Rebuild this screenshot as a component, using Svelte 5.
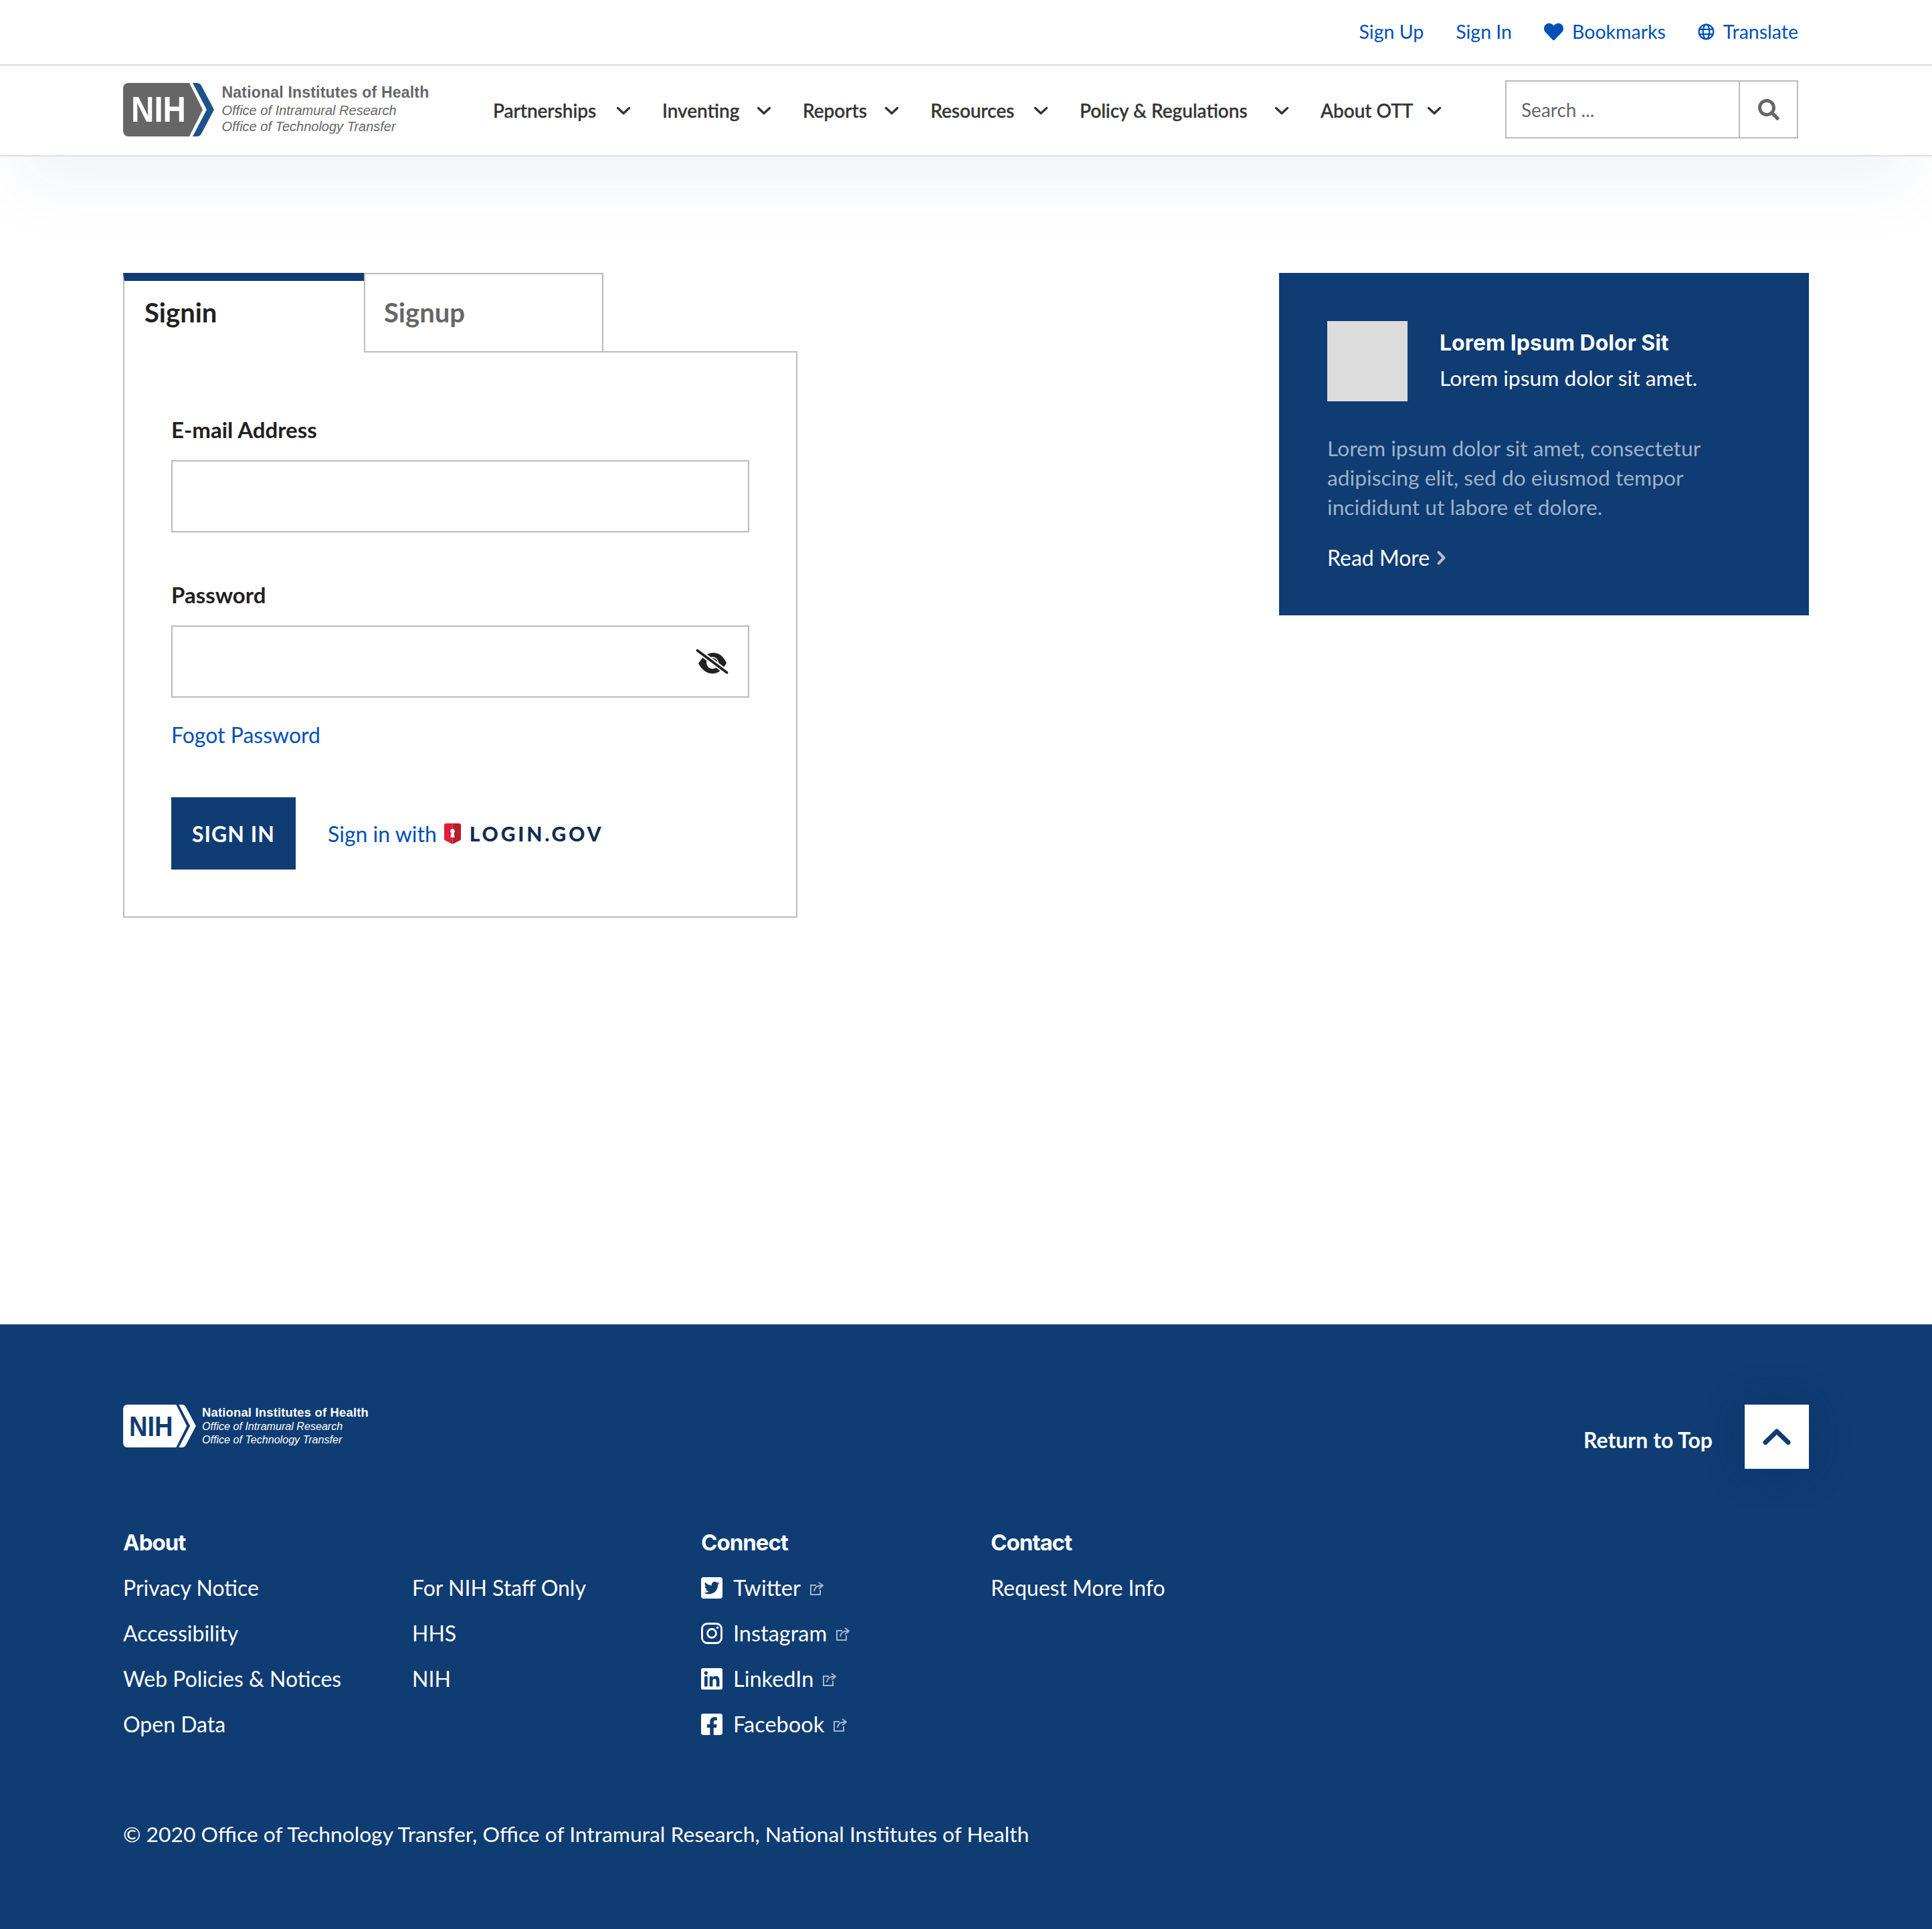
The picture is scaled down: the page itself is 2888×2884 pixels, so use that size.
<script>
  const navItems = [
    { label: 'Partnerships', width: 253 },
    { label: 'Inventing', width: 210 },
    { label: 'Reports', width: 191 },
    { label: 'Resources', width: 223 },
    { label: 'Policy & Regulations', width: 360 },
    { label: 'About OTT', width: 228 }
  ];
  const aboutA = ['Privacy Notice', 'Accessibility', 'Web Policies & Notices', 'Open Data'];
  const aboutB = ['For NIH Staff Only', 'HHS', 'NIH'];
  const socials = ['Twitter', 'Instagram', 'LinkedIn', 'Facebook'];
  const paths = {
    Twitter: 'M400 32H48C21.5 32 0 53.5 0 80v352c0 26.5 21.5 48 48 48h352c26.5 0 48-21.5 48-48V80c0-26.5-21.5-48-48-48zm-48.9 158.8c.2 2.8.2 5.7.2 8.5 0 86.7-66 186.6-186.6 186.6-37.2 0-71.7-10.8-100.7-29.4 5.3.6 10.4.8 15.8.8 30.7 0 58.9-10.4 81.4-28-28.8-.6-53-19.5-61.3-45.5 10.1 1.5 19.2 1.5 29.6-1.2-30-6.1-52.5-32.5-52.5-64.4v-.8c8.7 4.9 18.9 7.9 29.6 8.3a65.447 65.447 0 0 1-29.2-54.6c0-12.2 3.2-23.4 8.9-33.1 32.3 39.8 80.8 65.8 135.2 68.6-9.3-44.5 24-80.6 64-80.6 18.9 0 35.9 7.9 47.9 20.7 14.8-2.8 29-8.3 41.6-15.8-4.9 15.2-15.2 28-28.8 36.1 13.2-1.4 26-5.1 37.8-10.2-8.9 13.1-20.1 24.7-32.9 34z',
    LinkedIn: 'M416 32H31.9C14.3 32 0 46.5 0 64.3v383.4C0 465.5 14.3 480 31.9 480H416c17.6 0 32-14.5 32-32.3V64.3c0-17.8-14.4-32.3-32-32.3zM135.4 416H69V202.2h66.5V416zm-33.2-243c-21.3 0-38.5-17.3-38.5-38.5S80.9 96 102.2 96c21.2 0 38.5 17.3 38.5 38.5 0 21.3-17.2 38.5-38.5 38.5zm282.1 243h-66.4V312c0-24.8-.5-56.7-34.5-56.7-34.6 0-39.9 27-39.9 54.9V416h-66.4V202.2h63.7v29.2h.9c8.9-16.8 30.6-34.5 62.9-34.5 67.2 0 79.7 44.3 79.7 101.9V416z',
    Facebook: 'M400 32H48A48 48 0 0 0 0 80v352a48 48 0 0 0 48 48h137.25V327.69h-63V256h63v-54.64c0-62.15 37-96.48 93.67-96.48 27.14 0 55.52 4.84 55.52 4.84v61h-31.27c-30.81 0-40.42 19.12-40.42 38.73V256h68.78l-11 71.69h-57.78V480H400a48 48 0 0 0 48-48V80a48 48 0 0 0-48-48z'
  };
</script>

<div class="page">
  <header class="masthead">
    <div class="utility">
      <a class="ulink" href="#a">Sign Up</a>
      <a class="ulink" href="#a">Sign In</a>
      <a class="ulink" href="#a">
        <svg class="heart" viewBox="0 0 512 512"><path fill="currentColor" d="M462.3 62.6C407.5 15.9 326 24.3 275.7 76.2L256 96.5l-19.7-20.3C186.1 24.3 104.5 15.9 49.7 62.6c-62.8 53.6-66.1 149.8-9.9 207.9l193.5 199.8c12.5 12.9 32.8 12.9 45.3 0l193.5-199.8c56.3-58.1 53-154.3-9.8-207.9z"/></svg>
        Bookmarks
      </a>
      <a class="ulink" href="#a">
        <svg class="globe" viewBox="0 0 24 24" fill="none" stroke="currentColor" stroke-width="2.200"><circle cx="12" cy="12" r="10.400"/><ellipse cx="12" cy="12" rx="4.600" ry="10.400"/><path d="M2 8.500h20M2 15.500h20"/></svg>
        Translate
      </a>
    </div>
    <div class="navbar">
      <a class="logo head-logo" href="#a">
        <svg class="logo-mark" viewBox="0 0 136 80">
          <path fill="#666" d="M8 0H99L119 40 99 80H8a8 8 0 0 1-8-8V8a8 8 0 0 1 8-8z"/>
          <path fill="#1f5288" d="M104 0h6c3 0 5 1 7 4l19 36-19 36c-2 3-4 4-7 4h-6l21-40z"/>
          <text x="12" y="58" class="nih" textLength="82" lengthAdjust="spacingAndGlyphs">NIH</text>
        </svg>
        <span class="logo-text grey">
          <b>National Institutes of Health</b>
          <i>Office of Intramural Research</i>
          <i>Office of Technology Transfer</i>
        </span>
      </a>
      <nav class="nav">
        {#each navItems as item}
          <a class="nav-item" href="#a" style="width: {item.width}px">
            <span>{item.label}</span>
            <svg viewBox="0 0 22 13" fill="none" stroke="currentColor" stroke-width="3.400" stroke-linecap="round" stroke-linejoin="round"><path d="M2.500 2.500l8.500 8 8.500-8"/></svg>
          </a>
        {/each}
      </nav>
      <div class="search">
        <span class="search-field">Search ...</span>
        <span class="search-btn">
          <svg viewBox="0 0 512 512"><path fill="#666" d="M505 442.7L405.3 343c-4.5-4.5-10.6-7-17-7H372c27.6-35.3 44-79.7 44-128C416 93.1 322.9 0 208 0S0 93.1 0 208s93.1 208 208 208c48.3 0 92.7-16.4 128-44v16.3c0 6.4 2.5 12.5 7 17l99.7 99.7c9.4 9.4 24.6 9.4 33.9 0l28.3-28.3c9.4-9.4 9.4-24.6.1-34zM208 336c-70.7 0-128-57.2-128-128 0-70.7 57.2-128 128-128 70.7 0 128 57.2 128 128 0 70.7-57.2 128-128 128z"/></svg>
        </span>
      </div>
    </div>
  </header>

  <main class="main">
    <section class="auth">
      <div class="tabs">
        <div class="tab active">Signin</div>
        <div class="tab">Signup</div>
      </div>
      <div class="panel">
        <div class="label">E-mail Address</div>
        <div class="input"></div>
        <div class="label second">Password</div>
        <div class="input">
          <svg class="eye" viewBox="0 0 50 40">
            <path fill="#212121" d="M5 23c5-9 13-16 22-16 9 0 15 5 20 15-5 10-12 16-21 16-9 0-16-6-21-15z"/>
            <circle cx="26" cy="22" r="9" fill="#fff"/>
            <path fill="#212121" d="M19 19a8 8 0 0 1 15 3 8 8 0 0 1-1 4l-6-4a4 4 0 0 0-2-5z"/>
            <path d="M3 3l44 33" stroke="#fff" stroke-width="8"/>
            <path d="M3.500 3.500l44 33" stroke="#212121" stroke-width="3.800" stroke-linecap="round"/>
          </svg>
        </div>
        <a class="forgot" href="#a">Fogot Password</a>
        <div class="actions">
          <span class="btn">SIGN IN</span>
          <a class="login-gov" href="#a">
            <span>Sign in with</span>
            <svg class="shield" viewBox="0 0 25 31">
              <path fill="#e21c3d" d="M3 0h9.500v31L1.500 25.500C.5 25 0 24 0 23V3a3 3 0 0 1 3-3z"/>
              <path fill="#b51d28" d="M22 0h-9.500v31l11-5.500c1-.5 1.500-1.500 1.500-2.500V3a3 3 0 0 0-3-3z"/>
              <path fill="#fff" d="M12.500 8a3.500 3.500 0 0 1 2 6.300l1 6.700h-6l1-6.700a3.500 3.500 0 0 1 2-6.300z"/>
            </svg>
            <b>LOGIN.GOV</b>
          </a>
        </div>
      </div>
    </section>
    <aside class="card">
      <div class="card-head">
        <div class="thumb"></div>
        <div class="card-titles">
          <div class="card-title">Lorem Ipsum Dolor Sit</div>
          <div class="card-sub">Lorem ipsum dolor sit amet.</div>
        </div>
      </div>
      <p class="card-body">Lorem ipsum dolor sit amet, consectetur adipiscing elit, sed do eiusmod tempor incididunt ut labore et dolore.</p>
      <a class="read" href="#a">Read More
        <svg viewBox="0 0 12 20" fill="none" stroke="#b5bcc6" stroke-width="3.800" stroke-linecap="round" stroke-linejoin="round"><path d="M2.500 2.500l7 7.500-7 7.500"/></svg>
      </a>
    </aside>
  </main>

  <footer class="footer">
    <div class="foot-top">
      <a class="logo foot-logo" href="#a">
        <svg class="logo-mark small" viewBox="0 0 136 80">
          <path fill="#fff" d="M8 0H99L119 40 99 80H8a8 8 0 0 1-8-8V8a8 8 0 0 1 8-8z"/>
          <path fill="#fff" d="M104 0h6c3 0 5 1 7 4l19 36-19 36c-2 3-4 4-7 4h-6l21-40z"/>
          <text x="11" y="59" class="nih blue" textLength="82" lengthAdjust="spacingAndGlyphs">NIH</text>
        </svg>
        <span class="logo-text white">
          <b>National Institutes of Health</b>
          <i>Office of Intramural Research</i>
          <i>Office of Technology Transfer</i>
        </span>
      </a>
      <a class="totop" href="#a">
        <span class="totop-label">Return to Top</span>
        <span class="totop-btn">
          <svg viewBox="0 0 42 26" fill="none" stroke="#0f3c73" stroke-width="7" stroke-linecap="round" stroke-linejoin="round"><path d="M4 21.500L21 5l17 16.500"/></svg>
        </span>
      </a>
    </div>
    <div class="foot-cols">
      <div class="col-about">
        <h4>About</h4>
        <div class="about-grid">
          <ul>{#each aboutA as l}<li><a href="#a">{l}</a></li>{/each}</ul>
          <ul>{#each aboutB as l}<li><a href="#a">{l}</a></li>{/each}</ul>
        </div>
      </div>
      <div class="col">
        <h4>Connect</h4>
        <ul>
          {#each socials as s}
            <li class="social">
              {#if s === 'Instagram'}
                <svg class="soc" viewBox="0 0 32 32" fill="none" stroke="#fff" stroke-width="2.800"><rect x="1.500" y="1.500" width="29" height="29" rx="7.500"/><circle cx="16" cy="16" r="6.500"/><circle cx="24.500" cy="7.500" r="1.800" fill="#fff" stroke="none"/></svg>
              {:else}
                <svg class="soc" viewBox="0 32 448 448"><path fill="#fff" d={paths[s]}/></svg>
              {/if}
              <a href="#a">{s}</a>
              <svg class="ext" viewBox="0 0 20 20" fill="none" stroke="#a3b6cd" stroke-width="2"><path d="M15 12v7H1V5h8"/><path d="M6 14c1-6 4-8.500 12-8.500M13 1l6 4.500-6 5"/></svg>
            </li>
          {/each}
        </ul>
      </div>
      <div class="col">
        <h4>Contact</h4>
        <ul><li><a href="#a">Request More Info</a></li></ul>
      </div>
    </div>
    <p class="copy">© 2020 Office of Technology Transfer, Office of Intramural Research, National Institutes of Health</p>
  </footer>
</div>

<style>
  :global(body) { margin: 0; background: #fff; }
  .page { width: 2888px; height: 2884px; display: flex; flex-direction: column; font-family: Lato, "Liberation Sans", sans-serif; color: #212121; overflow: hidden; }
  a { text-decoration: none; color: inherit; }

  .masthead { box-shadow: 0 68px 100px -20px rgba(16, 60, 115, .06); }
  .utility { height: 98px; box-sizing: border-box; padding: 0 200px 2px 0; border-bottom: 2px solid #dcdcdc; display: flex; justify-content: flex-end; align-items: center; gap: 48px; font-size: 28.500px; color: #0050b8; }
  .ulink { display: flex; align-items: center; gap: 13px; }
  .heart { width: 29px; height: 29px; }
  .globe { width: 25px; height: 25px; }

  .navbar { height: 134px; border-bottom: 2px solid #dcdfe3; display: flex; align-items: center; padding: 0 200px 0 184px; background: #fff; }
  .logo { display: flex; align-items: center; }
  .head-logo { width: 553px; flex: none; margin-top: -2px; }
  .logo-mark { width: 136px; height: 80px; flex: none; }
  .nih { font-family: "Liberation Sans", sans-serif; font-size: 53px; font-weight: 700; fill: #fff; }
  .nih.blue { fill: #0f3c73; }
  .logo-text { display: flex; flex-direction: column; margin-left: 11.500px; font-family: "Liberation Sans", sans-serif; font-size: 20px; line-height: 24.500px; }
  .logo-text b { font-size: 23px; line-height: 26px; letter-spacing: .2px; margin: -2px 0 2px; }
  .logo-text.grey { color: #666; }
  .logo-text.white { color: #fff; margin-left: 9px; font-size: 16.100px; line-height: 19.500px; }
  .logo-text.white b { font-size: 18.400px; line-height: 23px; margin: 0; }

  .nav { display: flex; font-size: 28px; font-weight: 500; color: #333; -webkit-text-stroke: .4px #333; }
  .nav-item { display: flex; align-items: center; justify-content: space-between; padding-right: 47px; box-sizing: border-box; }
  .nav-item svg { width: 22px; height: 13px; }
  .search { margin: -3px 0 0 auto; width: 438px; height: 87px; border: 2px solid #bbb; box-sizing: border-box; display: flex; }
  .search-field { flex: 1; padding-left: 22px; font-size: 28px; color: #666; display: flex; align-items: center; border-right: 2px solid #bbb; }
  .search-btn { width: 85px; display: flex; align-items: center; justify-content: center; }
  .search-btn svg { width: 32px; height: 32px; }

  .main { display: flex; justify-content: space-between; align-items: flex-start; padding: 174px 184px 0; height: 1746px; box-sizing: border-box; }
  .auth { width: 1008px; }
  .tabs { display: flex; height: 117px; font-size: 40px; font-weight: 700; }
  .tab { width: 358px; box-sizing: border-box; border: 2px solid #bbb; border-bottom: 0; padding: 31px 0 0 28px; color: #666; line-height: 52px; }
  .tab.active { width: 360px; height: 119px; border-top: 12px solid #0f3c73; border-right: 0; color: #212121; padding: 21px 0 0 30px; position: relative; z-index: 1; background: #fff; }
  .tab.active::after { content: ""; position: absolute; right: -2px; top: 0; bottom: 0; width: 2px; background: #bbb; }
  .panel { height: 847px; box-sizing: border-box; border: 2px solid #bbb; padding: 95px 70px 0; }
  .label { font-size: 33px; font-weight: 700; line-height: 40px; margin-bottom: 26px; }
  .label.second { margin-top: 73px; margin-bottom: 26px; }
  .input { height: 108px; box-sizing: border-box; border: 2px solid #bbb; display: flex; align-items: center; justify-content: flex-end; padding-right: 29px; }
  .eye { width: 50px; height: 40px; }
  .forgot { display: block; color: #0050b8; font-size: 32px; line-height: 40px; margin-top: 36px; }
  .actions { display: flex; align-items: center; margin-top: 73px; }
  .btn { width: 186px; height: 108px; background: #0f3c73; color: #fff; display: flex; align-items: center; justify-content: center; font-size: 32px; font-weight: 700; letter-spacing: 1px; }
  .login-gov { display: flex; align-items: center; margin-left: 48px; color: #0050b8; font-size: 32px; }
  .shield { width: 25px; height: 31px; margin: 0 13px 0 11px; }
  .login-gov b { color: #112e51; font-size: 30px; font-weight: 900; letter-spacing: 3.800px; }

  .card { width: 792px; height: 512px; box-sizing: border-box; background: #0f3c73; padding: 72px; color: #fff; }
  .card-head { display: flex; align-items: center; }
  .thumb { width: 120px; height: 120px; background: #dcdcdc; flex: none; }
  .card-titles { margin: -2px 0 0 48px; }
  .card-title { font-family: Inter, Lato, sans-serif; font-size: 32px; font-weight: 700; line-height: 44px; }
  .card-sub { font-size: 31.800px; line-height: 44px; margin-top: 8px; }
  .card-body { margin: 48px 0 0; font-size: 31.800px; line-height: 44px; color: #9eb1c9; }
  .read { display: flex; align-items: center; gap: 11px; margin-top: 32px; font-size: 32px; line-height: 44px; }
  .read svg { width: 13px; height: 24px; }

  .footer { flex: 1; background: #0f3c73; color: #fff; padding: 120px 184px 0; font-size: 32px; }
  .foot-top { display: flex; justify-content: space-between; align-items: flex-start; }
  .foot-logo { align-items: flex-start; }
  .logo-mark.small { width: 109px; height: 64px; }
  .totop { display: flex; align-items: center; gap: 48px; font-size: 32px; font-weight: 700; }
  .totop-label { padding-top: 9px; }
  .totop-btn { width: 96px; height: 96px; background: #fff; display: flex; align-items: center; justify-content: center; box-shadow: 0 0 60px rgba(12, 40, 90, .3); }
  .totop-btn svg { width: 42px; height: 26px; }
  .foot-cols { display: flex; margin-top: 88px; }
  .foot-cols h4 { margin: 0 0 12px; font-family: Inter, Lato, sans-serif; font-size: 33px; line-height: 44px; font-weight: 700; letter-spacing: -1px; }
  ul { list-style: none; margin: 0; padding: 0; }
  li { height: 68px; line-height: 68px; display: flex; align-items: center; }
  .col-about { width: 864px; }
  .about-grid { display: flex; }
  .about-grid ul { width: 433px; }
  .col { width: 433px; }
  .social { font-size: 32.500px; }
  .soc { width: 32px; height: 32px; margin-right: 16px; }
  .ext { width: 20px; height: 20px; margin-left: 14px; margin-top: 2px; }
  .copy { margin: 108px 0 0; font-size: 31.800px; line-height: 44px; }
</style>
